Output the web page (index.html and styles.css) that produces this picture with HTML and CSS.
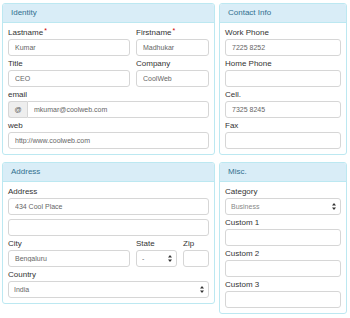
FILE: index.html
```html
<!DOCTYPE html>
<html lang="en">
<head>
    <meta charset="UTF-8">
    <meta name="viewport" content="width=device-width, initial-scale=1.0">
    <title>Contact</title>
    <link rel="stylesheet" href="styles.css">
</head>
<body>
    <div class="page">
        <div class="panel">
            <div class="panel-heading">Identity</div>
            <div class="panel-body">
                <div class="row">
                    <div class="group">
                        <label>Lastname<span class="req">*</span></label>
                        <input type="text" value="Kumar">
                    </div>
                    <div class="group">
                        <label>Firstname<span class="req">*</span></label>
                        <input type="text" value="Madhukar">
                    </div>
                </div>
                <div class="row">
                    <div class="group">
                        <label>Title</label>
                        <input type="text" value="CEO">
                    </div>
                    <div class="group">
                        <label>Company</label>
                        <input type="text" value="CoolWeb">
                    </div>
                </div>
                <div class="group">
                    <label>email</label>
                    <div class="input-group">
                        <span class="addon">@</span>
                        <input type="text" value="mkumar@coolweb.com">
                    </div>
                </div>
                <div class="group">
                    <label>web</label>
                    <input type="text" value="http://www.coolweb.com">
                </div>
            </div>
        </div>

        <div class="panel">
            <div class="panel-heading">Contact Info</div>
            <div class="panel-body">
                <div class="group">
                    <label>Work Phone</label>
                    <input type="text" value="7225 8252">
                </div>
                <div class="group">
                    <label>Home Phone</label>
                    <input type="text" value="">
                </div>
                <div class="group">
                    <label>Cell.</label>
                    <input type="text" value="7325 8245">
                </div>
                <div class="group">
                    <label>Fax</label>
                    <input type="text" value="">
                </div>
            </div>
        </div>

        <div class="panel">
            <div class="panel-heading">Address</div>
            <div class="panel-body">
                <div class="group">
                    <label>Address</label>
                    <input type="text" value="434 Cool Place">
                    <input type="text" class="extra" value="">
                </div>
                <div class="row">
                    <div class="group">
                        <label>City</label>
                        <input type="text" value="Bengaluru">
                    </div>
                    <div class="row small">
                        <div class="group">
                            <label>State</label>
                            <div class="select">
                                <select><option>-</option></select>
                                <svg class="arrows" width="4" height="7" viewBox="0 0 4 7"><path d="M2 0L4 2.5H0Z M2 7L4 4.5H0Z" fill="#333"/></svg>
                            </div>
                        </div>
                        <div class="group">
                            <label>Zip</label>
                            <input type="text" value="">
                        </div>
                    </div>
                </div>
                <div class="group">
                    <label>Country</label>
                    <div class="select">
                        <select><option>India</option></select>
                        <svg class="arrows" width="4" height="7" viewBox="0 0 4 7"><path d="M2 0L4 2.5H0Z M2 7L4 4.5H0Z" fill="#333"/></svg>
                    </div>
                </div>
            </div>
        </div>

        <div class="panel">
            <div class="panel-heading">Misc.</div>
            <div class="panel-body">
                <div class="group">
                    <label>Category</label>
                    <div class="select">
                        <select class="muted"><option>Business</option></select>
                        <svg class="arrows" width="4" height="7" viewBox="0 0 4 7"><path d="M2 0L4 2.5H0Z M2 7L4 4.5H0Z" fill="#333"/></svg>
                    </div>
                </div>
                <div class="group">
                    <label>Custom 1</label>
                    <input type="text" value="">
                </div>
                <div class="group">
                    <label>Custom 2</label>
                    <input type="text" value="">
                </div>
                <div class="group">
                    <label>Custom 3</label>
                    <input type="text" value="">
                </div>
            </div>
        </div>
    </div>
</body>
</html>
```

FILE: styles.css
```css
body {
    margin: 3px 3px 0 2px;
    font-family: "Liberation Sans", Arial, sans-serif;
    color: #333;
    background: #fff;
}
.page {
    display: grid;
    grid-template-columns: 213px 1fr;
    column-gap: 4px;
    row-gap: 7px;
    align-items: start;
}
.panel {
    border: 1px solid #bce8f1;
    border-radius: 3px;
    background: #fff;
}
.panel-heading {
    height: 18px;
    line-height: 18px;
    padding: 0 8px;
    font-size: 8px;
    color: #31708f;
    background: #d9edf7;
    border-bottom: 1px solid #bce8f1;
    border-radius: 2px 2px 0 0;
}
.panel-body {
    padding: 4px 5px 5px 5px;
}
.row {
    display: grid;
    grid-template-columns: 122px 1fr;
    column-gap: 6px;
}
.row.small {
    grid-template-columns: 41px 1fr;
}
.group {
    margin-bottom: 2px;
}
.panel-body > .group:last-child,
.panel-body > .row:last-child .group {
    margin-bottom: 0;
}
label {
    display: block;
    font-size: 8px;
    line-height: 11px;
    margin-bottom: 1px;
    color: #333;
}
.req {
    color: #c00;
    font-size: 7px;
    vertical-align: top;
    margin-left: 1px;
    line-height: 8px;
}
input, select {
    display: block;
    box-sizing: border-box;
    width: 100%;
    height: 17px;
    margin: 0;
    padding: 0 6px;
    font-family: "Liberation Sans", Arial, sans-serif;
    font-size: 7px;
    color: #666;
    background: #fff;
    border: 1px solid #d6d6d6;
    border-radius: 3px;
    outline: none;
}
input.extra {
    margin-top: 4px;
}
select {
    appearance: none;
    -webkit-appearance: none;
    padding-left: 5px;
}
select.muted {
    color: #888;
}
.select {
    position: relative;
}
.arrows {
    position: absolute;
    right: 5px;
    top: 5px;
}
.input-group {
    display: flex;
}
.addon {
    box-sizing: border-box;
    width: 19px;
    height: 17px;
    line-height: 15px;
    text-align: center;
    font-size: 7px;
    color: #555;
    background: #eee;
    border: 1px solid #d6d6d6;
    border-right: none;
    border-radius: 3px 0 0 3px;
}
.input-group input {
    flex: 1;
    border-radius: 0 3px 3px 0;
}
```
